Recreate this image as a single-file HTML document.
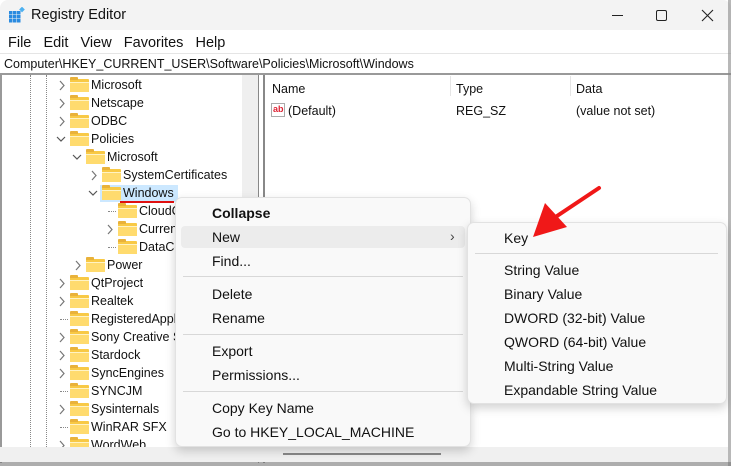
<!DOCTYPE html>
<html><head><meta charset="utf-8"><style>
*{margin:0;padding:0;box-sizing:border-box}
body{width:731px;height:466px;overflow:hidden;background:#fff;font-family:"Liberation Sans",sans-serif;font-size:12.5px;color:#111;position:relative}
.a{position:absolute;white-space:nowrap}
.tree{position:absolute;left:2px;top:75px;width:240px;height:387px;overflow:hidden;background:#fff}
.fd{position:absolute;width:19px;height:13px;top:3px;background:#f8c945;border-radius:1px}
.fd:before{content:"";position:absolute;left:0;top:-2px;width:8px;height:3px;background:#e9b23a;border-radius:1px 1px 0 0}
.fd:after{content:"";position:absolute;left:0;right:0;bottom:0;height:9px;background:#ffdb6e;border-top:1px solid #fff3c4}
.dot{position:absolute;border-left:1px dotted #888}
.menu{position:absolute;background:#f9f9f9;border:1px solid #e2e2e2;border-radius:7px;box-shadow:0 4px 10px rgba(0,0,0,.18)}
.mi{position:absolute;font-size:14px;line-height:20px}
.sep{position:absolute;height:1px;background:#d8d8d8}
</style></head><body>
<div class="a" style="left:0;top:0;width:731px;height:30px;background:#f3f3f3;border-radius:8px 8px 0 0"></div>
<svg class="a" style="left:8px;top:7px" width="17" height="17" viewBox="0 0 17 17">
<g fill="#2a8be0"><rect x="1" y="4" width="3.5" height="3.5"/><rect x="5" y="4" width="3.5" height="3.5"/><rect x="9" y="4" width="3.5" height="3.5"/>
<rect x="1" y="8" width="3.5" height="3.5"/><rect x="5" y="8" width="3.5" height="3.5"/><rect x="9" y="8" width="3.5" height="3.5"/>
<rect x="1" y="12" width="3.5" height="3.5"/><rect x="5" y="12" width="3.5" height="3.5"/><rect x="9" y="12" width="3.5" height="3.5"/></g>
<rect x="12" y="0.5" width="4" height="4" fill="#4db1f0" transform="rotate(45 14 2.5)"/></svg>
<div class="a" style="left:31px;top:7px;font-size:14.5px">Registry Editor</div>
<div class="a" style="left:612px;top:15px;width:11px;height:1px;background:#222"></div>
<div class="a" style="left:656px;top:10px;width:11px;height:11px;border:1px solid #222;border-radius:2px"></div>
<svg class="a" style="left:701px;top:9px" width="13" height="13"><path d="M1 1L12 12M12 1L1 12" stroke="#222" stroke-width="1.1"/></svg>
<div class="a" style="left:8px;top:35px;font-size:14.5px">File&nbsp;&nbsp;&nbsp;Edit&nbsp;&nbsp;&nbsp;View&nbsp;&nbsp;&nbsp;Favorites&nbsp;&nbsp;&nbsp;Help</div>
<div class="a" style="left:0;top:53px;width:731px;height:1px;background:#e5e5e5"></div>
<div class="a" style="left:4px;top:57px;font-size:12.5px">Computer\HKEY_CURRENT_USER\Software\Policies\Microsoft\Windows</div>
<div class="a" style="left:0;top:73px;width:731px;height:2px;background:#999"></div>
<div class="a" style="left:0;top:75px;width:2px;height:388px;background:#999"></div>
<div class="a" style="left:728px;top:0;width:3px;height:466px;background:#888;opacity:.6"></div>
<div class="tree">
<div class="dot" style="left:28px;top:0;height:390px"></div>
<div class="dot" style="left:44px;top:0;height:390px"></div>
</div>
<div class="a" style="left:242px;top:75px;width:16px;height:372px;background:#efefef"></div>
<div class="a" style="left:258px;top:75px;width:1px;height:388px;background:#888"></div>
<div class="a" style="left:263px;top:75px;width:2px;height:388px;background:#888"></div>
<div class="a" style="left:0;top:447px;width:728px;height:15px;background:#f0f0f0"></div>
<div class="a" style="left:283px;top:453px;width:158px;height:2px;background:#888"></div>
<div class="a" style="left:0;top:462px;width:731px;height:4px;background:#777;opacity:.6"></div>
<div class="a" style="left:272px;top:82px">Name</div>
<div class="a" style="left:450px;top:76px;width:1px;height:20px;background:#e5e5e5"></div>
<div class="a" style="left:456px;top:82px">Type</div>
<div class="a" style="left:570px;top:76px;width:1px;height:20px;background:#e5e5e5"></div>
<div class="a" style="left:576px;top:82px">Data</div>
<div class="a" style="left:271px;top:103px;width:14px;height:14px;border:1px solid #aaa;background:#fff;color:#d23;font-size:9px;font-weight:bold;line-height:11px;padding-left:1px">ab</div>
<div class="a" style="left:288px;top:104px">(Default)</div>
<div class="a" style="left:456px;top:104px">REG_SZ</div>
<div class="a" style="left:576px;top:104px">(value not set)</div>
<div class="menu" style="left:175px;top:197px;width:296px;height:250px"></div>
<div class="a" style="left:181px;top:226px;width:284px;height:22px;background:#ececec;border-radius:4px"></div>
<div class="mi a" style="left:212px;top:203px;font-weight:bold">Collapse</div>
<div class="mi a" style="left:212px;top:227px">New</div>
<div class="a" style="left:450px;top:228px;color:#444;font-size:14px">&#x203A;</div>
<div class="mi a" style="left:212px;top:251px">Find...</div>
<div class="sep" style="left:183px;top:276px;width:280px"></div>
<div class="mi a" style="left:212px;top:284px">Delete</div>
<div class="mi a" style="left:212px;top:308px">Rename</div>
<div class="sep" style="left:183px;top:334px;width:280px"></div>
<div class="mi a" style="left:212px;top:341px">Export</div>
<div class="mi a" style="left:212px;top:365px">Permissions...</div>
<div class="sep" style="left:183px;top:391px;width:280px"></div>
<div class="mi a" style="left:212px;top:398px">Copy Key Name</div>
<div class="mi a" style="left:212px;top:422px">Go to HKEY_LOCAL_MACHINE</div>
<div class="menu" style="left:467px;top:222px;width:260px;height:182px"></div>
<div class="mi a" style="left:504px;top:228px">Key</div>
<div class="sep" style="left:475px;top:253px;width:243px"></div>
<div class="mi a" style="left:504px;top:260px">String Value</div>
<div class="mi a" style="left:504px;top:284px">Binary Value</div>
<div class="mi a" style="left:504px;top:308px">DWORD (32-bit) Value</div>
<div class="mi a" style="left:504px;top:332px">QWORD (64-bit) Value</div>
<div class="mi a" style="left:504px;top:356px">Multi-String Value</div>
<div class="mi a" style="left:504px;top:380px">Expandable String Value</div>
<svg class="a" style="left:525px;top:183px" width="80" height="60"><path d="M74 5L32 33" stroke="#f01818" stroke-width="4" stroke-linecap="round"/><path d="M8 54L20 20L42 44Z" fill="#f01818"/></svg>
<script>
var R=[[85,"Microsoft",1,">"],[103,"Netscape",1,">"],[121,"ODBC",1,">"],[139,"Policies",1,"v"],[157,"Microsoft",2,"v"],[175,"SystemCertificates",3,">"],[193,"Windows",3,"v"],[211,"CloudContent",4,""],[229,"CurrentVersion",4,">"],[247,"DataCollection",4,""],[265,"Power",2,">"],[283,"QtProject",1,">"],[301,"Realtek",1,">"],[319,"RegisteredApplications",1,""],[337,"Sony Creative Software",1,">"],[355,"Stardock",1,">"],[373,"SyncEngines",1,">"],[391,"SYNCJM",1,""],[409,"Sysinternals",1,">"],[427,"WinRAR SFX",1,""],[445,"WordWeb",1,">"],[463,"WOW6432Node",1,">"]];
var h="";R.forEach(function(r){var L=(r[2]-1)*16,t=r[0]-9;
if(r[1]=="Windows")h+='<div class="a" style="left:100px;top:'+(t+1)+'px;width:78px;height:17px;background:#cce8ff"></div><div class="a" style="left:120px;top:'+(t+17)+'px;width:54px;height:2px;background:#e01010"></div>';
if(r[3]==">")h+='<svg class="a" style="left:'+(58+L)+'px;top:'+(t+4)+'px" width="8" height="11"><path d="M2 1L6 5.5L2 10" stroke="#777" fill="none" stroke-width="1.2"/></svg>';
if(r[3]=="v")h+='<svg class="a" style="left:'+(56+L)+'px;top:'+(t+6)+'px" width="10" height="7"><path d="M1 1L5 5L9 1" stroke="#555" fill="none" stroke-width="1.2"/></svg>';
if(r[3]=="")h+='<div class="a" style="left:'+(60+L)+'px;top:'+(t+9)+'px;width:8px;border-top:1px dotted #888"></div>';
h+='<div class="a" style="left:'+(70+L)+'px;top:'+t+'px;width:180px;height:18px"><div class="fd" style="left:0"></div><span style="position:absolute;left:21px;top:2px">'+r[1]+'</span></div>';});
var w=document.createElement("div");w.style.cssText="position:absolute;left:0;top:0;width:242px;height:447px;overflow:hidden";w.innerHTML='<div style="position:absolute;left:0;top:75px;width:242px;height:372px;overflow:hidden"><div style="position:absolute;left:0;top:-75px;width:242px;height:466px">'+h+'</div></div>';
document.body.insertBefore(w,document.querySelector(".menu"));
</script>
</body></html>
